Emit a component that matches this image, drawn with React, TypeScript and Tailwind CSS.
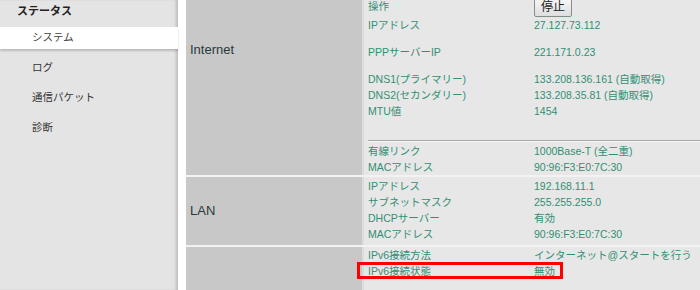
import React from 'react';

const font = 'font-[family-name:Liberation_Sans,Noto_Sans_CJK_JP,sans-serif]';

interface InfoRowProps {
  label: string;
  value: React.ReactNode;
}

function InfoRow({ label, value }: InfoRowProps) {
  return (
    <div className="flex h-[16px] items-center text-[10.5px] leading-[16px] text-[#338f74]">
      <span className="w-[166px] shrink-0 whitespace-nowrap">{label}</span>
      <span className="whitespace-nowrap">{value}</span>
    </div>
  );
}

const menu = ['ログ', '通信パケット', '診断'];

export default function App() {
  return (
    <div className={`${font} flex h-[290px] w-[700px] overflow-hidden bg-white`}>
      {/* サイドメニュー */}
      <aside className="w-[178px] shrink-0 bg-[#e4e4e4] shadow-[inset_-3px_0_3px_-1px_rgba(0,0,0,0.18)]">
        <div className="flex h-[22px] items-center pl-[17px] text-[11px] font-bold text-[#222]">ステータス</div>
        <div className="mt-[5px] flex h-[22px] items-center bg-white pl-[32px] text-[10.5px] text-[#444] shadow-[0_2px_2px_rgba(0,0,0,0.18)]">
          システム
        </div>
        <div className="mt-[4px]">
          {menu.map((item) => (
            <div key={item} className="flex h-[30px] items-center pl-[32px] text-[10.5px] text-[#333]">
              {item}
            </div>
          ))}
        </div>
      </aside>

      {/* ステータス表 */}
      <main className="ml-[8px] flex flex-1 flex-col gap-[2px] bg-[#f2f2f2]">
        <section className="flex h-[175px] shrink-0">
          <div className="w-[176px] shrink-0 bg-[#c8c8c8] pl-[4px] pt-[42px] text-[13px] leading-[16px] text-[#2a3a3a]">
            Internet
          </div>
          <div className="flex-1 border-l-2 border-[#dcdcdc] bg-[#e7e7e7] pl-[4px]">
            <div className="flex h-[17px] text-[10.5px] text-[#338f74]">
              <span className="w-[166px] shrink-0 leading-[12px]">操作</span>
              <button className="-mt-[3px] h-[20px] rounded-[2px] border border-[#8a8a8a] bg-gradient-to-b from-[#f8f8f8] to-[#dedede] px-[6px] text-[12px] leading-[16px] text-[#222]">
                停止
              </button>
            </div>
            <InfoRow label="IPアドレス" value="27.127.73.112" />
            <div className="mt-[11px]">
              <InfoRow label="PPPサーバーIP" value="221.171.0.23" />
            </div>
            <div className="mt-[11px]">
              <InfoRow label="DNS1(プライマリー)" value="133.208.136.161 (自動取得)" />
              <InfoRow label="DNS2(セカンダリー)" value="133.208.35.81 (自動取得)" />
              <InfoRow label="MTU値" value="1454" />
            </div>
            <div className="mt-[21px] border-t border-b border-t-[#a8a8a8] border-b-[#f6f6f6]" />
            <div className="mt-[1px]">
              <InfoRow label="有線リンク" value="1000Base-T (全二重)" />
              <InfoRow label="MACアドレス" value="90:96:F3:E0:7C:30" />
            </div>
          </div>
        </section>

        <section className="flex h-[68px] shrink-0">
          <div className="flex w-[176px] shrink-0 items-center bg-[#c8c8c8] pl-[4px] text-[13px] text-[#2a3a3a]">
            LAN
          </div>
          <div className="flex-1 border-l-2 border-[#dcdcdc] bg-[#e7e7e7] pl-[4px] pt-[1px]">
            <InfoRow label="IPアドレス" value="192.168.11.1" />
            <InfoRow label="サブネットマスク" value="255.255.255.0" />
            <InfoRow label="DHCPサーバー" value="有効" />
            <InfoRow label="MACアドレス" value="90:96:F3:E0:7C:30" />
          </div>
        </section>

        <section className="flex flex-1">
          <div className="w-[176px] shrink-0 bg-[#c8c8c8]" />
          <div className="relative flex-1 border-l-2 border-[#dcdcdc] bg-[#e7e7e7] pl-[4px]">
            <InfoRow label="IPv6接続方法" value="インターネット@スタートを行う" />
            <InfoRow label="IPv6接続状態" value="無効" />
            <div className="absolute left-[-7px] top-[15px] h-[17px] w-[206px] border-[3px] border-[#ff0000]" />
          </div>
        </section>
      </main>
    </div>
  );
}
